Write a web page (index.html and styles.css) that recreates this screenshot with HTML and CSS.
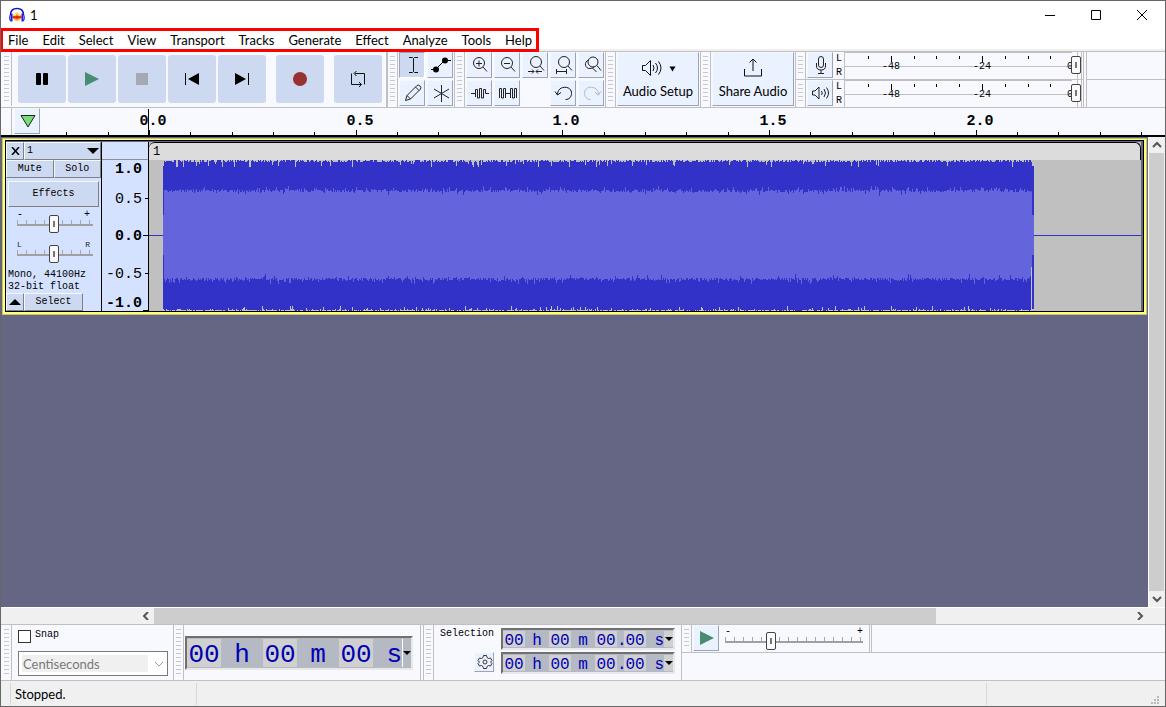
FILE: index.html
```
<!DOCTYPE html>
<html lang="en">

<head>
  <title>1</title>
  <meta charset="UTF-8">
  <meta name="viewport" content="width=device-width, initial-scale=1.0">
  <link rel="stylesheet" href="styles.css">
</head>

<body>
  <header class="title-bar">
    <svg class="logo" width="18" height="16" viewBox="0 0 18 16">
      <ellipse cx="9" cy="9.500" rx="4.500" ry="4.500" fill="#ffe9a8" />
      <path d="M4 10l1.500-2 1.500 1 2-3 2 3 1.500-1L14 10l-1.500 2-1.500 1-2 1-2-1-1.500-1z" fill="#ffa62c" />
      <path d="M4 10l2-1 1 .5 2-1 2 1 1-.5 2 1-2 1.500-1-.5-2 1-2-1-1 .5z" fill="#e8200c" />
      <path d="M2.500 8C2.500 3.500 5.500 1.500 9 1.500S15.500 3.500 15.500 8" fill="none" stroke="#1414c8" stroke-width="1.500" />
      <path d="M3.500 6.500C.5 7 .5 14 3 14.500h1.500v-8zM14.500 6.500c3 .5 3 7.500.5 8h-1.500v-8z" fill="#1a1ae6" />
      <path d="M2.500 8.500v4M15.500 8.500v4" stroke="#6d7cff" />
    </svg>
    <h1>1</h1>
    <div class="window-buttons">
      <button aria-label="Minimize"><svg width="12" height="12"><path d="M1 6.500h10" stroke="#000" /></svg></button>
      <button aria-label="Maximize"><svg width="12" height="12"><path d="M1.500 1.500h9v9h-9z" fill="none" stroke="#000" /></svg></button>
      <button aria-label="Close"><svg width="12" height="12"><path d="M1 1l10 10M11 1L1 11" stroke="#000" /></svg></button>
    </div>
  </header>

  <div class="menu-row">
    <nav class="menu">
      <button>File</button>
      <button>Edit</button>
      <button>Select</button>
      <button>View</button>
      <button>Transport</button>
      <button>Tracks</button>
      <button>Generate</button>
      <button>Effect</button>
      <button>Analyze</button>
      <button>Tools</button>
      <button>Help</button>
    </nav>
  </div>

  <div class="dock dock-top">
    <section class="toolbar transport">
      <span class="grip"></span>
      <div class="transport-buttons">
        <button aria-label="Pause"><svg width="14" height="14"><rect x="1" y="1" width="5" height="12" rx="1" /><rect x="8" y="1" width="5" height="12" rx="1" /></svg></button>
        <button aria-label="Play"><svg width="14" height="14"><path d="M0 0l14 7-14 7z" fill="#4a8c72" /></svg></button>
        <button aria-label="Stop"><svg width="12" height="12"><path d="M0 0h12v12H0z" fill="#a5a9b4" /></svg></button>
        <button aria-label="Skip to start"><svg width="14" height="12"><path d="M.5 0v12" stroke="#000" /><path d="M14 0v12L3 6z" /></svg></button>
        <button aria-label="Skip to end"><svg width="14" height="12"><path d="M13.500 0v12" stroke="#000" /><path d="M0 0v12l11-6z" /></svg></button>
      </div>
      <button aria-label="Record"><svg width="14" height="14"><circle cx="7" cy="7" r="7" fill="#963232" /></svg></button>
      <button aria-label="Loop"><svg width="16" height="18" viewBox="0 0 16 18" fill="none" stroke="#111"><path d="M1.500 6v8.500h10M5 3.500h9.500V13M6.500 1L4 3.500 6.500 6M1.500 6V3.500M14.500 13v1.500M9 12l2.500 2.500L9 17" /></svg></button>
    </section>

    <section class="toolbar">
      <span class="grip"></span>
      <div class="tool-grid cols-2">
        <button class="tool pressed" aria-label="Selection tool"><svg width="20" height="20" fill="none" stroke="#111"><path d="M6 2.500h3.500l1 1 1-1H15M6 17.500h3.500l1-1 1 1H15M10.500 3.500v13" /></svg></button>
        <button class="tool" aria-label="Envelope tool"><svg width="20" height="20"><path d="M0 14.500h4M5 14L14 5M14 5.500h6" stroke="#000" fill="none" /><circle cx="5" cy="14.500" r="3" /><circle cx="14" cy="5.500" r="3" /></svg></button>
        <button class="tool" aria-label="Draw tool"><svg width="20" height="20" fill="none" stroke="#222"><path d="M2.500 17.500l1.500-5L14 2.500q1.500-1 3 .5t.5 3l-10 10zM12.500 4l3.500 3.500M4 12.500L7.500 16" /></svg></button>
        <button class="tool" aria-label="Multi-tool"><svg width="20" height="20" stroke="#222"><path d="M10.500 2v17M3 6l15 9M18 6L3 15" /></svg></button>
      </div>
    </section>

    <section class="toolbar">
      <span class="grip"></span>
      <div class="tool-grid cols-5">
        <button class="tool" aria-label="Zoom in"><svg width="20" height="20" fill="none" stroke="#222"><circle cx="9" cy="8" r="5.500" /><path d="M6 8.500h6M9 5.500v6M13 12l4 4.500" /></svg></button>
        <button class="tool" aria-label="Zoom out"><svg width="20" height="20" fill="none" stroke="#222"><circle cx="9" cy="8" r="5.500" /><path d="M6 8.500h6M13 12l4 4.500" /></svg></button>
        <button class="tool" aria-label="Fit selection"><svg width="20" height="20" fill="none" stroke="#222"><circle cx="10" cy="7" r="5.500" /><path d="M14 11l4 4.500M2 16.500h6M10 16.500h6M6 14.500l2 2-2 2M12 14.500l-2 2 2 2" /></svg></button>
        <button class="tool" aria-label="Fit project"><svg width="20" height="20" fill="none" stroke="#222"><circle cx="10" cy="7" r="5.500" /><path d="M14 11l4 4.500M2.500 14v5M12.500 14v5M2.500 16.500h10" /></svg></button>
        <button class="tool" aria-label="Zoom toggle"><svg width="20" height="20" fill="none" stroke="#222"><circle cx="11" cy="7" r="5" /><path d="M6.500 5C1.500 7 3 14 8 13.500q3 0 4.500-2M15 10.500l4 5M10.500 13l4 4" /></svg></button>
        <button class="tool" aria-label="Trim outside selection"><svg width="20" height="20" fill="none" stroke="#222"><path d="M1 10.500h4.500V6.500h2V15h2V5.500h2V15h2V6.500h2v4H19M5.500 10v4" /></svg></button>
        <button class="tool" aria-label="Silence selection"><svg width="20" height="20" fill="none" stroke="#222"><path d="M1.500 15V5.500h2V15h2V5.500h2V15M7.500 10.500h5M12.500 15V5.500h2V15h2V5.500h2V15" /></svg></button>
        <span></span>
        <button class="tool" aria-label="Undo"><svg width="20" height="20" fill="none" stroke="#111"><path d="M3.500 11.500C3.500 2 18 2 17.500 10.500c0 3-2 6-6 6M1 8.500l2.500 3.500L7 9.500" /></svg></button>
        <button class="tool" aria-label="Redo" disabled><svg width="20" height="20" fill="none" stroke="#b4b8c0"><path d="M16.500 11.500C16.500 2 2 2 2.500 10.500c0 3 2 6 6 6M19 8.500l-2.500 3.500L13 9.500" /></svg></button>
      </div>
    </section>

    <section class="toolbar">
      <span class="grip"></span>
      <button class="tool wide">
        <svg width="36" height="22" fill="none" stroke="#111"><path d="M2.500 8.500h3l5-5v15l-5-5h-3zM13 8q2 3 0 6M15.500 6q4 5 0 10M18.500 4.500q5 6.500 0 13" /><path d="M29.500 9.500h6l-3 5z" fill="#000" stroke="none" /></svg>
        Audio Setup
      </button>
    </section>

    <section class="toolbar">
      <span class="grip"></span>
      <button class="tool wide">
        <svg width="22" height="22" fill="none" stroke="#111"><path d="M2.500 12v7h17v-7M11 2v12M7.500 5.500L11 2l3.500 3.500" /></svg>
        Share Audio
      </button>
    </section>

    <div class="meters">
      <section class="meter-bar">
        <span class="grip"></span>
        <button class="tool" aria-label="Record meter"><svg width="20" height="20" fill="none" stroke="#222"><rect x="7.500" y="1.500" width="5" height="11" rx="2.500" /><path d="M5.500 8v3q0 4 4.500 4t4.500-4V8M10 15v3M7 18.500h6" /></svg></button>
        <div class="channels"><span>L</span><span>R</span></div>
        <div class="meter">
          <svg class="meter-scale" width="237" height="27"></svg>
          <input type="range" class="slider" aria-label="Recording volume" value="100">
        </div>
      </section>
      <section class="meter-bar">
        <span class="grip"></span>
        <button class="tool" aria-label="Playback meter"><svg width="20" height="20" fill="none" stroke="#222"><path d="M1.500 8h2.500l4-4v12l-4-4H1.500zM10.500 8q1.500 2 0 4M13 6q3 4 0 8M15.500 4.500q4 5.500 0 11" /></svg></button>
        <div class="channels"><span>L</span><span>R</span></div>
        <div class="meter">
          <svg class="meter-scale" width="237" height="27"></svg>
          <input type="range" class="slider" aria-label="Playback volume" value="100">
        </div>
      </section>
    </div>
    <div class="dock-rest"></div>
  </div>

  <div class="timeline">
    <span class="timeline-edge"></span>
    <button class="tool pin" aria-label="Pinned play head"><svg width="16" height="14"><path d="M1 1.500h14L8 13z" fill="#78dc78" stroke="#222" /></svg></button>
    <svg class="time-ruler" height="27"></svg>
  </div>

  <main class="workspace">
    <div class="tracks">
      <article class="track">
        <div class="track-panel">
          <div class="panel-row head">
            <button class="face close" aria-label="Close track"><svg width="9" height="8"><path d="M1 0l7 8M8 0L1 8" stroke="#000" stroke-width="1.500" /></svg></button>
            <button class="face name">1 <svg width="12" height="6"><path d="M0 0h12L6 6z" /></svg></button>
          </div>
          <div class="panel-row">
            <button class="face">Mute</button>
            <button class="face">Solo</button>
          </div>
          <button class="face effects">Effects</button>
          <div class="panel-slider">
            <div class="ends"><span>-</span><span>+</span></div>
            <input type="range" class="slider ticked" aria-label="Gain" value="49">
          </div>
          <div class="panel-slider">
            <div class="ends pan"><span>L</span><span>R</span></div>
            <input type="range" class="slider ticked" aria-label="Pan" value="49">
          </div>
          <p class="format">Mono, 44100Hz<br>32-bit float</p>
          <div class="panel-row foot">
            <button class="face close" aria-label="Collapse"><svg width="12" height="6"><path d="M0 6h12L6 0z" /></svg></button>
            <button class="face select">Select</button>
          </div>
        </div>
        <svg class="level-ruler" width="47" height="169">
          <path d="M0 17.500h46" stroke="#909090" />
          <path d="M43 56.500h3M41 93.500h5M43 131.500h3M41 168.500h5" stroke="#000" />
          <g text-anchor="end">
            <text class="strong" x="40" y="31">1.0</text>
            <text x="40" y="61">0.5</text>
            <text class="strong" x="40" y="98">0.0</text>
            <text x="40" y="136">-0.5</text>
            <text class="strong" x="40" y="165">-1.0</text>
          </g>
        </svg>
        <div class="clip">
          <div class="clip-name">1</div>
          <canvas class="wave" height="151"></canvas>
        </div>
      </article>
    </div>
    <div class="scroll vertical">
      <button aria-label="Scroll up"><svg width="10" height="8"><path d="M1 6l4-4 4 4" fill="none" stroke="#555" stroke-width="2" /></svg></button>
      <span class="thumb"></span>
      <button aria-label="Scroll down"><svg width="10" height="8"><path d="M1 2l4 4 4-4" fill="none" stroke="#555" stroke-width="2" /></svg></button>
    </div>
  </main>

  <div class="scroll horizontal">
    <button aria-label="Scroll left"><svg width="8" height="8"><path d="M6 0L2 4l4 4" fill="none" stroke="#555" stroke-width="2" /></svg></button>
    <span class="thumb"></span>
    <span class="trough"></span>
    <button aria-label="Scroll right"><svg width="8" height="8"><path d="M2 0l4 4-4 4" fill="none" stroke="#555" stroke-width="2" /></svg></button>
  </div>

  <div class="dock dock-bottom">
    <section class="toolbar">
      <span class="grip"></span>
      <div class="snap">
        <label><input type="checkbox">Snap</label>
        <div class="combo">
          <select aria-label="Snap to" disabled>
            <option>Centiseconds</option>
          </select>
          <svg width="10" height="6"><path d="M1 0l4 4 4-4" fill="none" stroke="#999" /></svg>
        </div>
      </div>
    </section>

    <section class="toolbar time-bar">
      <span class="grip"></span>
      <div class="time big">
        <b>00</b><i>h</i><b>00</b><i>m</i><b>00</b><i class="last">s</i>
        <button aria-label="Time format"><svg width="8" height="4"><path d="M0 0h8L4 4z" /></svg></button>
      </div>
    </section>

    <section class="toolbar">
      <span class="grip"></span>
      <div class="selection">
        <div class="selection-label">
          <span>Selection</span>
          <button class="tool gear" aria-label="Selection options"><svg width="16" height="16" viewBox="0 0 16 16" fill="none" stroke="#333"><path d="M6.500 1.500h3l.5 2 1.500 1 2-.5 1.500 2.500L13.500 8l1.500 1.500-1.500 2.500-2-.5-1.500 1-.5 2h-3l-.5-2-1.500-1-2 .5L1 9.500 2.500 8 1 6.500 2.500 4l2 .5L6 3.500z" /><circle cx="8" cy="8" r="2" /></svg></button>
        </div>
        <div class="selection-times">
          <div class="time">
            <b>00</b><i>h</i><b>00</b><i>m</i><b>00</b><i class="dot">.</i><b>00</b><i class="last">s</i>
            <button aria-label="Start format"><svg width="8" height="4"><path d="M0 0h8L4 4z" /></svg></button>
          </div>
          <div class="time">
            <b>00</b><i>h</i><b>00</b><i>m</i><b>00</b><i class="dot">.</i><b>00</b><i class="last">s</i>
            <button aria-label="End format"><svg width="8" height="4"><path d="M0 0h8L4 4z" /></svg></button>
          </div>
        </div>
      </div>
    </section>

    <div class="speed-column">
      <section class="speed-bar">
        <span class="grip"></span>
        <button class="tool" aria-label="Play at speed"><svg width="16" height="14"><path d="M1 0l14 7-14 7z" fill="#4a8c72" /></svg></button>
        <div class="speed">
          <div class="ends"><span>-</span><span>+</span></div>
          <input type="range" class="slider ticked" aria-label="Playback speed" value="32">
        </div>
      </section>
    </div>
  </div>

  <footer class="status-bar">
    <span class="status-text">Stopped.</span>
    <span class="status-main"></span>
    <span class="status-end"><svg width="9" height="9" fill="#b8b8b8"><path d="M6 0h2v2H6zM3 3h2v2H3zM6 3h2v2H6zM0 6h2v2H0zM3 6h2v2H3zM6 6h2v2H6z" /></svg></span>
  </footer>

  <script src="app.js"></script>
</body>

</html>
```
FILE: styles.css
```
:root {
  --bar: #f8f9ff;
  --button: #ebf2ff;
  --pressed: #cdd9f0;
  --line: #c0c0c0;
  --shade: #9aa3b8;
  --panel: #d5e2ff;
  --mono: "Liberation Mono", monospace;
}

* {
  box-sizing: border-box;
  margin: 0;
  padding: 0;
}

body {
  display: flex;
  flex-direction: column;
  height: 100vh;
  border: 1px solid #666;
  background: #fff;
  color: #000;
  font: 13px Lato, sans-serif;
  overflow: hidden;
}

button {
  display: flex;
  align-items: center;
  justify-content: center;
  border: none;
  background: none;
  color: inherit;
  font: inherit;
}

svg {
  display: block;
  flex: none;
}

/* title and menu */
.title-bar {
  display: flex;
  align-items: center;
  height: 27px;
  padding-left: 7px;
}

.title-bar h1 {
  flex: 1;
  padding-left: 4px;
  font-size: 13px;
  font-weight: 400;
}

.window-buttons {
  display: flex;
}

.window-buttons button {
  width: 46px;
  height: 27px;
}

.menu-row {
  display: flex;
  height: 24px;
  flex: none;
  background: linear-gradient(#fff 21px, #f0f0f0 21px, #f0f0f0 23px, var(--line) 23px);
}

.menu {
  display: flex;
  align-items: center;
  gap: 14px;
  padding: 0 4px 0 5px;
  margin-left: -1px;
  border: 3px solid #f00;
  background: #fff;
}

/* toolbars */
.dock {
  display: flex;
  flex: none;
  height: 56px;
  padding-left: 1px;
  border-bottom: 1px solid var(--line);
  background: var(--bar);
}

.toolbar {
  display: flex;
  padding-right: 1px;
  border-right: 1px solid var(--line);
}

.grip {
  flex: none;
  width: 10px;
  margin-right: 1px;
  border-right: 1px solid var(--line);
  background: repeating-linear-gradient(#c8c8cc 0 1px, transparent 1px 4px) 2px 4px / 5px calc(100% - 8px) no-repeat;
}

.transport {
  align-items: center;
  gap: 10px;
  padding: 0 4px 1px 0;
  border-right-width: 2px;
}

.transport .grip {
  align-self: stretch;
  margin-right: -4px;
}

.transport-buttons {
  display: flex;
  gap: 2px;
}

.transport button {
  width: 48px;
  height: 48px;
  border-radius: 3px;
  background: var(--pressed);
}

.tool-grid {
  display: grid;
  grid-auto-rows: 26px;
  gap: 2px;
}

.cols-2 {
  grid-template-columns: repeat(2, 26px);
}

.cols-5 {
  grid-template-columns: repeat(5, 26px);
}

.tool {
  flex: none;
  width: 26px;
  height: 26px;
  padding-left: 2px;
  border: 1px solid;
  border-color: #f4f8ff var(--shade) var(--shade) #f4f8ff;
  background: var(--button);
}

.tool.pressed {
  border-color: var(--shade) #fff #fff var(--shade);
  background: var(--pressed);
}

.tool.wide {
  flex-direction: column;
  gap: 4px;
  width: 82px;
  height: 54px;
  padding: 0 0 3px;
  white-space: nowrap;
}

.meters {
  display: flex;
  flex-direction: column;
  border-right: 1px solid var(--line);
}

.meter-bar {
  display: flex;
  height: 28px;
  padding-right: 1px;
  border-bottom: 1px solid var(--line);
}

.channels {
  display: flex;
  flex-direction: column;
  justify-content: space-around;
  width: 11px;
  padding-left: 3px;
  font: 10px/13px var(--mono);
}

.meter {
  position: relative;
  border-right: 1px solid var(--line);
}

.meter-scale text {
  font: 10px var(--mono);
}

.meter .slider {
  position: absolute;
  left: 0;
  top: 4px;
  width: 100%;
}

.dock-rest {
  flex: 1;
  margin-left: 2px;
  border-left: 1px solid var(--line);
  background: linear-gradient(transparent 27px, var(--line) 27px, var(--line) 28px, transparent 28px);
}

/* sliders */
.slider {
  display: block;
  appearance: none;
  height: 18px;
  background: none;
}

.slider::-webkit-slider-thumb {
  appearance: none;
  width: 10px;
  height: 18px;
  border: 1px solid #444;
  border-radius: 2px;
  background: linear-gradient(#777, #777) center / 2px 6px no-repeat, #fafafa;
}

.slider.ticked {
  background:
    linear-gradient(#a0a0a0, #a0a0a0) 0 9px / 100% 2px no-repeat,
    repeating-linear-gradient(90deg, #a8a8a8 0 1px, transparent 1px 9px) 0 5px / 100% 4px no-repeat;
}

.ends {
  display: flex;
  justify-content: space-between;
  font: 10px/8px var(--mono);
}

.panel-slider .ends {
  padding-right: 3px;
}

.pan {
  color: #223;
  font-size: 8px;
}

/* timeline */
.timeline {
  display: flex;
  flex: none;
  height: 29px;
  border-bottom: 2px solid #000;
  background: var(--bar);
}

.timeline-edge {
  width: 11px;
  margin-right: 2px;
  border-right: 1px solid var(--line);
}

.time-ruler {
  flex: 1;
  min-width: 0;
}

.time-ruler text {
  font: bold 15px var(--mono);
}

/* track area */
.workspace {
  display: flex;
  flex: 1;
  min-height: 0;
  background: #646684;
}

.tracks {
  flex: 1;
  min-width: 0;
  padding: 1px 1px 0;
}

.track {
  display: flex;
  border: 2px solid #ffff78;
  border-top-width: 1px;
  outline: 1px solid #c4c080;
  box-shadow: inset 0 0 0 1px #000;
  margin: 1px;
  padding: 2px 3px 1px 1px;
}

.track-panel {
  display: flex;
  flex-direction: column;
  width: 96px;
  border-right: 1px solid #000;
  background: var(--panel);
  font: 10px/12px var(--mono);
}

.face {
  border: 1px solid;
  border-color: #f4f8ff #808080 #808080 #f4f8ff;
  background: var(--pressed);
}

.panel-row {
  display: flex;
  flex: none;
  height: 18px;
}

.panel-row .face {
  flex: 1;
}

.panel-row .face.close {
  flex: none;
  width: 18px;
}

.panel-row .name {
  justify-content: space-between;
  padding: 0 1px 0 2px;
}

.face.effects {
  height: 26px;
  margin: 3px 2px 2px;
}

.panel-slider {
  height: 30px;
  padding: 2px 8px 0 11px;
}

.panel-slider .slider {
  width: 76px;
  margin-top: -4px;
}

.format {
  padding-left: 2px;
  white-space: nowrap;
}

.panel-row .select {
  flex: none;
  width: 59px;
}

.level-ruler {
  border-right: 1px solid #000;
  background: var(--panel);
}

.level-ruler text {
  font: 15px var(--mono);
}

.level-ruler .strong {
  font-weight: bold;
}

.clip {
  flex: 1;
  min-width: 0;
  background: #c0c0c0;
}

.clip-name {
  height: 18px;
  padding-left: 4px;
  border: 1px solid #000;
  border-width: 1px 1px 0 0;
  border-radius: 6px 6px 0 0;
  background: #dcdcdc;
  font: 12px/18px var(--mono);
}

.wave {
  display: block;
  width: 100%;
  height: 151px;
}

/* scroll bars */
.scroll {
  display: flex;
  flex: none;
  background: #f0f0f0;
}

.scroll .thumb {
  background: #cdcdcd;
}

.vertical {
  flex-direction: column;
  width: 17px;
  border-left: 1px solid #fff;
}

.vertical button {
  height: 16px;
}

.vertical .thumb {
  flex: 1;
  margin-right: 1px;
}

.horizontal {
  height: 18px;
  padding-left: 137px;
  padding-right: 17px;
  border-top: 1px solid #fff;
  border-bottom: 1px solid var(--line);
}

.horizontal button {
  width: 16px;
}

.horizontal .thumb {
  flex: 782;
}

.horizontal .trough {
  flex: 196;
}

/* bottom toolbars */
.snap {
  display: flex;
  flex-direction: column;
  gap: 8px;
  padding: 4px 4px 0 5px;
  font: 10px var(--mono);
}

.snap label {
  display: flex;
  gap: 4px;
  height: 14px;
}

.snap input {
  appearance: none;
  width: 13px;
  height: 13px;
  margin-top: 1px;
  border: 1px solid #333;
  background: #fff;
}

.combo {
  position: relative;
}

.combo svg {
  position: absolute;
  right: 4px;
  top: 11px;
}

.combo select {
  appearance: none;
  display: block;
  width: 150px;
  height: 25px;
  padding-left: 4px;
  border: 1px solid #7a7a7a;
  border-radius: 0;
  background: linear-gradient(#f0f0f0, #f0f0f0) 3px 3px / 126px 17px no-repeat #fff;
  color: #787878;
  font: 13px Lato, sans-serif;
  opacity: 1;
}

.time {
  display: flex;
  align-items: stretch;
  width: 174px;
  height: 22px;
  padding: 1px 0;
  border: 2px solid;
  border-color: #707070 #e8e8e8 #e8e8e8 #707070;
  background: #b4b9c3;
  color: #0000b4;
  font: 16px/20px var(--mono);
  text-align: center;
}

.time b {
  width: 22px;
  background: #d0d0d0;
  font-weight: 400;
}

.time i {
  width: 24px;
  font-style: normal;
}

.time .dot {
  width: 7px;
}

.time .last {
  flex: 1;
  text-align: right;
}

.time button {
  width: 9px;
  background: #d0d0d0;
  color: #000;
}

.time-bar {
  align-items: center;
  padding-right: 7px;
}

.time-bar .grip {
  align-self: stretch;
}

.time.big {
  width: 228px;
  height: 34px;
  font-size: 26px;
  line-height: 32px;
}

.big b {
  width: 34px;
}

.big i {
  width: 42px;
}

.big button {
  border-left: 1px solid #fff;
  background: none;
}

.time-bar + .toolbar {
  margin-left: 2px;
  border-left: 1px solid var(--line);
}

.selection {
  display: flex;
  gap: 7px;
  padding: 3px 5px 0;
}

.selection-label {
  display: flex;
  flex-direction: column;
  align-items: flex-end;
  gap: 12px;
  font: 10px/12px var(--mono);
}

.tool.gear {
  width: 20px;
  height: 20px;
}

.selection-times {
  display: flex;
  flex-direction: column;
  gap: 2px;
}

.speed-column {
  flex: 1;
}

.speed-bar {
  display: flex;
  height: 28px;
  border-bottom: 1px solid var(--line);
}

.speed {
  width: 151px;
  padding: 3px 6px 0;
  border-right: 1px solid var(--line);
}

.speed::after {
  content: "";
  display: block;
  height: 27px;
  margin: -25px -9px 0 0;
  border-right: 1px solid var(--line);
  pointer-events: none;
}

.speed .slider {
  width: 100%;
  margin-top: -4px;
}

/* status bar */
.status-bar {
  display: flex;
  align-items: center;
  flex: none;
  height: 25px;
  padding: 0 5px 0 9px;
  background: #f0f0f0;
}

.status-bar span {
  height: 22px;
  border-left: 1px solid #d7d7d7;
}

.status-text {
  width: 186px;
  padding-left: 4px;
  line-height: 22px;
}

.status-main {
  flex: 1;
}

.status-bar .status-end {
  display: flex;
  align-items: flex-end;
  justify-content: flex-end;
  width: 174px;
}
```
FILE: app.js
```
const SVG_NS = 'http://www.w3.org/2000/svg';

function add(parent, name, attrs, text) {
  const el = document.createElementNS(SVG_NS, name);
  for (const key in attrs) el.setAttribute(key, attrs[key]);
  if (text) el.textContent = text;
  parent.appendChild(el);
}

// Timeline: ten ticks per second, a label every half second
function drawTimeline() {
  const ruler = document.querySelector('.time-ruler');
  const box = ruler.getBoundingClientRect();
  const origin = 149 - box.left;
  const step = 41.33;
  ruler.replaceChildren();
  for (let i = -2; origin + i * step < box.width; i++) {
    const x = Math.round(origin + i * step);
    const major = i % 5 === 0;
    add(ruler, 'rect', { x: x, y: major ? 22 : 24, width: 1, height: 5, fill: '#000' });
    if (major) add(ruler, 'text', { x: x + 4, y: 17, 'text-anchor': 'middle' }, (i / 10).toFixed(1));
  }
  add(ruler, 'rect', { x: origin - 1, y: 1, width: 1, height: 26, fill: '#000' });
}

function drawMeter(svg) {
  add(svg, 'path', { d: 'M.5 0v27M0 14.5h228M0 .5h228M233.500 0v27', stroke: '#c0c0c0' });
  for (let i = 0; i < 9; i++) {
    const tall = i === 1 || i === 5;
    add(svg, 'rect', { x: Math.round(24 + i * 22.8), y: 4, width: 1, height: tall ? 6 : 3, fill: '#000' });
  }
  add(svg, 'text', { x: 47, y: 17, 'text-anchor': 'middle' }, '-48');
  add(svg, 'text', { x: 138, y: 17, 'text-anchor': 'middle' }, '-24');
  add(svg, 'text', { x: 226, y: 17, 'text-anchor': 'middle' }, '0');
}

function drawWave() {
  const canvas = document.querySelector('.wave');
  const ctx = canvas.getContext('2d');
  const start = 14;
  const length = 871;
  let seed = 7;
  const random = () => (seed = (seed * 16807) % 2147483647) / 2147483647;
  const rms = () => 43 + random() * 3 + (random() < 0.25 ? random() * 4 : 0) - (random() < 0.1 ? random() * 4 : 0);

  canvas.width = canvas.clientWidth;
  ctx.fillStyle = '#3232c8';
  ctx.fillRect(0, 75, canvas.width, 1);
  for (let x = 0; x < length; x++) {
    const edge = x < 1 || x > length - 3;
    const top = random() < 0.06 ? 4 + random() * 4 : random() * 3;
    const bottom = random() < 0.1 ? random() * 5 : random() * 1.5;
    const up = edge ? 20 : rms();
    const down = edge ? 20 : rms();
    ctx.fillStyle = '#3232c8';
    ctx.fillRect(start + x, Math.floor(edge ? 6 : top), 1, 151 - Math.floor(edge ? 8 : top + bottom));
    ctx.fillStyle = '#6464dc';
    ctx.fillRect(start + x, 75 - Math.floor(up), 1, Math.floor(up) + Math.floor(down));
  }
  ctx.fillStyle = '#c0c0dc';
  ctx.fillRect(start + length - 3, 107, 1, 44);
}

document.querySelectorAll('.meter-scale').forEach(drawMeter);
drawTimeline();
drawWave();
window.addEventListener('resize', () => {
  drawTimeline();
  drawWave();
});
```
